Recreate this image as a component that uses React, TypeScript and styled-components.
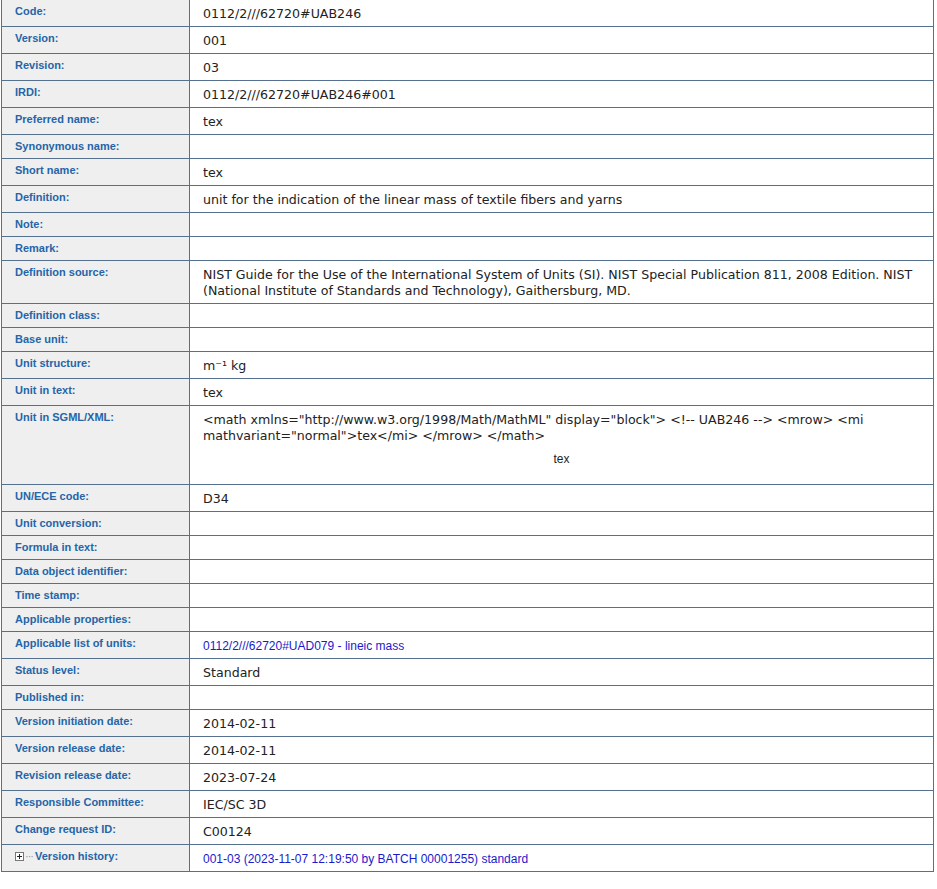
import styled, { createGlobalStyle } from "styled-components";

const Global = createGlobalStyle`
  body { margin: 0; background: #fff; }
`;

const Table = styled.table`
  border-collapse: collapse;
  width: 933px;
  margin: 0 0 0 1px;
`;

const Label = styled.td`
  width: 161px;
  background: #efefef;
  border: 1px solid #56718f;
  border-top: 0;
  vertical-align: top;
  padding: 4px 13px 5px 13px;
  font: bold 11px/14px "Liberation Sans", Arial, sans-serif;
  color: #2565a8;
`;

const Value = styled.td`
  border: 1px solid #56718f;
  border-top: 0;
  vertical-align: top;
  padding: 6px 13px 4px 13px;
  font: 12.6px/16px "DejaVu Sans", Verdana, sans-serif;
  color: #222;
`;

const Link = styled.a`
  font: 12px/16px "Liberation Sans", Arial, sans-serif;
  color: #1a1acc;
  text-decoration: none;
`;

const MathOut = styled.div`
  text-align: center;
  font: 12px "Liberation Sans", Arial, sans-serif;
  margin: 8px 0 14px;
`;

const Plus = styled.span`
  display: inline-block;
  width: 7px;
  height: 7px;
  border: 1px solid #777;
  position: relative;
  margin-right: 1px;
  background: #fff;
  vertical-align: -1px;
  &::before, &::after { content: ""; position: absolute; background: #222; }
  &::before { left: 1px; right: 1px; top: 3px; height: 1px; }
  &::after { top: 1px; bottom: 1px; left: 3px; width: 1px; }
`;

const Dots = styled.span`
  color: #999;
  font-weight: normal;
  letter-spacing: -1px;
  margin-right: 2px;
`;

const rows: [string, React.ReactNode][] = [
  ["Code:", "0112/2///62720#UAB246"],
  ["Version:", "001"],
  ["Revision:", "03"],
  ["IRDI:", "0112/2///62720#UAB246#001"],
  ["Preferred name:", "tex"],
  ["Synonymous name:", ""],
  ["Short name:", "tex"],
  ["Definition:", "unit for the indication of the linear mass of textile fibers and yarns"],
  ["Note:", ""],
  ["Remark:", ""],
  [
    "Definition source:",
    "NIST Guide for the Use of the International System of Units (SI). NIST Special Publication 811, 2008 Edition. NIST (National Institute of Standards and Technology), Gaithersburg, MD.",
  ],
  ["Definition class:", ""],
  ["Base unit:", ""],
  ["Unit structure:", "m⁻¹ kg"],
  ["Unit in text:", "tex"],
  [
    "Unit in SGML/XML:",
    <>
      {'<math xmlns="http://www.w3.org/1998/Math/MathML" display="block"> <!-- UAB246 --> <mrow> <mi mathvariant="normal">tex</mi> </mrow> </math>'}
      <MathOut>tex</MathOut>
    </>,
  ],
  ["UN/ECE code:", "D34"],
  ["Unit conversion:", ""],
  ["Formula in text:", ""],
  ["Data object identifier:", ""],
  ["Time stamp:", ""],
  ["Applicable properties:", ""],
  ["Applicable list of units:", <Link href="#">0112/2///62720#UAD079 - lineic mass</Link>],
  ["Status level:", "Standard"],
  ["Published in:", ""],
  ["Version initiation date:", "2014-02-11"],
  ["Version release date:", "2014-02-11"],
  ["Revision release date:", "2023-07-24"],
  ["Responsible Committee:", "IEC/SC 3D"],
  ["Change request ID:", "C00124"],
];

export default function App() {
  return (
    <>
      <Global />
      <Table>
        <tbody>
          {rows.map(([k, v]) => (
            <tr key={k}>
              <Label>{k}</Label>
              <Value>{v}</Value>
            </tr>
          ))}
          <tr>
            <Label>
              <Plus />
              <Dots>···</Dots>Version history:
            </Label>
            <Value>
              <Link href="#">001-03 (2023-11-07 12:19:50 by BATCH 00001255) standard</Link>
            </Value>
          </tr>
        </tbody>
      </Table>
    </>
  );
}
